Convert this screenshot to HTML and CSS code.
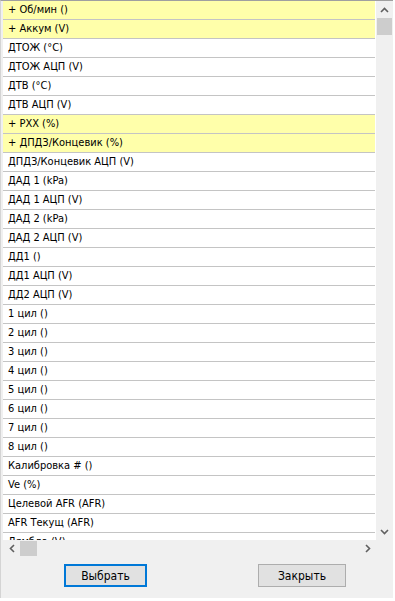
FILE: index.html
```html
<!DOCTYPE html>
<html lang="ru">
<head>
  <meta charset="UTF-8" />
  <title>Выбор параметров</title>
  <link rel="stylesheet" href="styles.css">
</head>
<body>
  <div class="dialog">
    <div class="listbox">
      <div class="list">
        <div class="row marked">+ Об/мин ()</div>
        <div class="row marked">+ Аккум (V)</div>
        <div class="row">ДТОЖ (°C)</div>
        <div class="row">ДТОЖ АЦП (V)</div>
        <div class="row">ДТВ (°C)</div>
        <div class="row">ДТВ АЦП (V)</div>
        <div class="row marked">+ РХХ (%)</div>
        <div class="row marked">+ ДПДЗ/Концевик (%)</div>
        <div class="row">ДПДЗ/Концевик АЦП (V)</div>
        <div class="row">ДАД 1 (kPa)</div>
        <div class="row">ДАД 1 АЦП (V)</div>
        <div class="row">ДАД 2 (kPa)</div>
        <div class="row">ДАД 2 АЦП (V)</div>
        <div class="row">ДД1 ()</div>
        <div class="row">ДД1 АЦП (V)</div>
        <div class="row">ДД2 АЦП (V)</div>
        <div class="row">1 цил ()</div>
        <div class="row">2 цил ()</div>
        <div class="row">3 цил ()</div>
        <div class="row">4 цил ()</div>
        <div class="row">5 цил ()</div>
        <div class="row">6 цил ()</div>
        <div class="row">7 цил ()</div>
        <div class="row">8 цил ()</div>
        <div class="row">Калибровка # ()</div>
        <div class="row">Ve (%)</div>
        <div class="row">Целевой AFR (AFR)</div>
        <div class="row">AFR Текущ (AFR)</div>
        <div class="row">Лямбда (V)</div>
      </div>

      <div class="vscroll">
        <div class="arrow">
          <svg width="9" height="6" viewBox="0 0 9 6"><path d="M1 5 L4.5 1.5 L8 5" fill="none" stroke="#606060" stroke-width="1.6"/></svg>
        </div>
        <div class="vthumb"></div>
        <div class="track"></div>
        <div class="arrow">
          <svg width="9" height="6" viewBox="0 0 9 6"><path d="M1 1 L4.5 4.5 L8 1" fill="none" stroke="#606060" stroke-width="1.6"/></svg>
        </div>
      </div>

      <div class="hscroll">
        <div class="arrow">
          <svg width="6" height="9" viewBox="0 0 6 9"><path d="M5 1 L1.5 4.5 L5 8" fill="none" stroke="#606060" stroke-width="1.6"/></svg>
        </div>
        <div class="hthumb"></div>
        <div class="track"></div>
        <div class="arrow">
          <svg width="6" height="9" viewBox="0 0 6 9"><path d="M1 1 L4.5 4.5 L1 8" fill="none" stroke="#606060" stroke-width="1.6"/></svg>
        </div>
      </div>

      <div class="corner"></div>
    </div>

    <div class="buttons">
      <button class="btn default">Выбрать</button>
      <button class="btn">Закрыть</button>
    </div>
  </div>
</body>
</html>
```

FILE: styles.css
```css
* {
  margin: 0;
  padding: 0;
  box-sizing: border-box;
}

body {
  width: 395px;
  height: 601px;
  overflow: hidden;
  background: #fff;
  font-family: Tahoma, "DejaVu Sans Condensed", "Liberation Sans", sans-serif;
  font-size: 11px;
  color: #000;
}

.dialog {
  width: 393px;
  height: 598px;
  background: #f0f0f0;
  border-top: 1px solid #a0a0a0;
  border-left: 1px solid #d4d4d4;
  padding-left: 2px;
  display: flex;
  flex-direction: column;
}

/* список + полосы прокрутки */
.listbox {
  display: grid;
  grid-template-columns: 373px 17px;
  grid-template-rows: 539px 17px;
}

.list {
  background: #fff;
  overflow: hidden;
  padding-right: 1px;
}

.row {
  height: 19px;
  line-height: 18px;
  padding-left: 5px;
  border-bottom: 1px solid #c4c4c4;
  white-space: nowrap;
}

.row.marked {
  background: #ffffaa;
}

.vscroll {
  display: flex;
  flex-direction: column;
  background: #f0f0f0;
}

.hscroll {
  display: flex;
  background: #f0f0f0;
}

.arrow {
  width: 17px;
  height: 17px;
  display: flex;
  align-items: center;
  justify-content: center;
  flex-shrink: 0;
}

.track {
  flex: 1;
}

.vthumb {
  height: 17px;
  margin: 0 1px;
  background: #cdcdcd;
}

.hthumb {
  width: 17px;
  margin: 1px 0;
  background: #cdcdcd;
}

.corner {
  background: #f0f0f0;
}

/* кнопки */
.buttons {
  display: flex;
  padding: 7px 0 0 61px;
  gap: 111px;
}

.btn {
  height: 23px;
  width: 88px;
  background: #e1e1e1;
  border: 1px solid #adadad;
  font-family: inherit;
  font-size: 12px;
  color: #000;
}

.btn.default {
  width: 83px;
  border: 2px solid #0078d7;
}
```
